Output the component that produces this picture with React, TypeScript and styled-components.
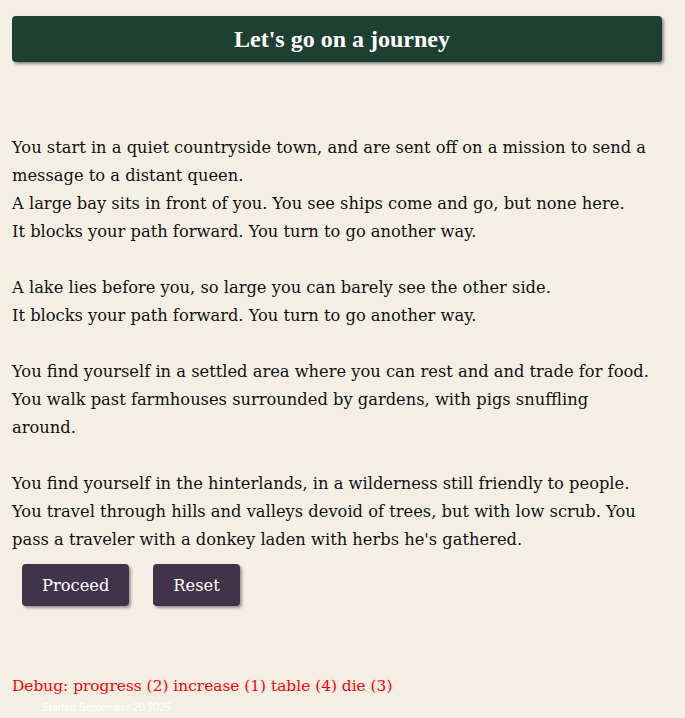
import React from 'react';
import styled, { createGlobalStyle } from 'styled-components';

const GlobalStyle = createGlobalStyle`
  html, body {
    margin: 0;
    padding: 0;
    background: #f4efe4;
  }
`;

const Page = styled.div`
  padding: 16px 12px 0 12px;
  font-family: "DejaVu Serif", Georgia, serif;
  color: #111;
`;

const TitleBar = styled.h1`
  margin: 0 11px 0 0;
  height: 46px;
  padding-left: 10px;
  display: flex;
  align-items: center;
  justify-content: center;
  background: #1e4033;
  color: #fff;
  border-radius: 4px;
  box-shadow: 2px 2px 3px #8a8a86;
  font-family: "Liberation Serif", "Times New Roman", serif;
  font-size: 24px;
  font-weight: bold;
`;

const Story = styled.div`
  margin-top: 72px;
  font-size: 16.3px;
  line-height: 28px;
  white-space: nowrap;
`;

const Passage = styled.p`
  margin: 0 0 28px 0;
  &:last-child {
    margin-bottom: 0;
  }
`;

const Controls = styled.div`
  display: flex;
  gap: 24px;
  margin: 10px 0 0 10px;
`;

const ActionButton = styled.button`
  height: 42px;
  padding: 0 20px;
  border: none;
  border-radius: 4px;
  background: #413349;
  color: #fff;
  font-family: "DejaVu Serif", Georgia, serif;
  font-size: 16.3px;
  box-shadow: 2px 2px 3px #9a9690;
  cursor: pointer;
`;

const Debug = styled.div`
  margin-top: 66px;
  color: #ff0000;
  font-size: 15.4px;
  line-height: 28px;
`;

const Started = styled.div`
  margin-left: 30px;
  font-family: "Liberation Sans", Arial, sans-serif;
  font-size: 10.5px;
  line-height: 14px;
  color: #ffffff;
`;

// each passage is a list of the lines as they are set on the page
const passages: string[][] = [
  [
    'You start in a quiet countryside town, and are sent off on a mission to send a',
    'message to a distant queen.',
    'A large bay sits in front of you. You see ships come and go, but none here.',
    'It blocks your path forward. You turn to go another way.',
  ],
  [
    'A lake lies before you, so large you can barely see the other side.',
    'It blocks your path forward. You turn to go another way.',
  ],
  [
    'You find yourself in a settled area where you can rest and and trade for food.',
    'You walk past farmhouses surrounded by gardens, with pigs snuffling',
    'around.',
  ],
  [
    'You find yourself in the hinterlands, in a wilderness still friendly to people.',
    'You travel through hills and valleys devoid of trees, but with low scrub. You',
    "pass a traveler with a donkey laden with herbs he's gathered.",
  ],
];

export default function App() {
  return (
    <>
      <GlobalStyle />
      <Page>
        <TitleBar>Let's go on a journey</TitleBar>
        <Story>
          {passages.map((lines, i) => (
            <Passage key={i}>
              {lines.map((line, j) => (
                <React.Fragment key={j}>
                  {j > 0 && <br />}
                  {line}
                </React.Fragment>
              ))}
            </Passage>
          ))}
        </Story>
        <Controls>
          <ActionButton>Proceed</ActionButton>
          <ActionButton>Reset</ActionButton>
        </Controls>
        <Debug>Debug: progress (2) increase (1) table (4) die (3)</Debug>
        <Started>Started September 20 2025</Started>
      </Page>
    </>
  );
}
